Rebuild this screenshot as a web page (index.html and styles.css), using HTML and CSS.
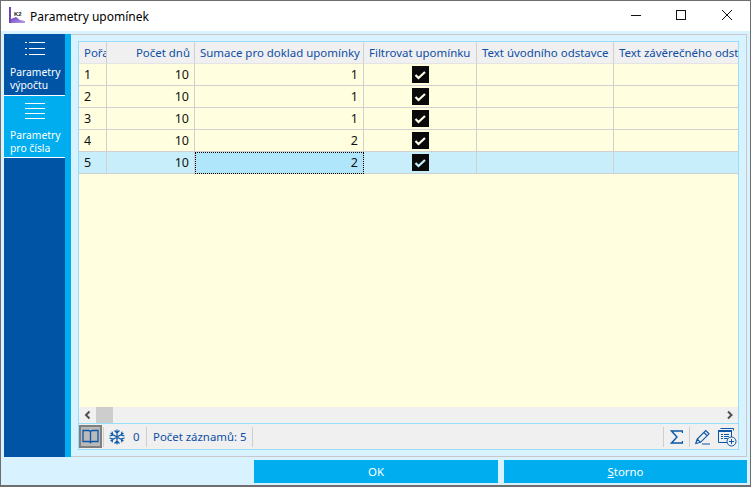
FILE: index.html
```html
<!DOCTYPE html>
<html lang="cs">
<head>
<meta charset="utf-8">
<title>Parametry upomínek</title>
<link rel="stylesheet" href="styles.css">
</head>
<body>
<div class="window">
  <header class="titlebar">
    <svg class="app-icon" width="16" height="16" viewBox="0 0 16 16">
      <defs><linearGradient id="lg" x1="0" y1="0" x2="1" y2="1"><stop offset="0" stop-color="#6a3fc0"/><stop offset="1" stop-color="#b9a2e6"/></linearGradient></defs>
      <path d="M0 0h2v16H0z" fill="#6f45b8"/>
      <path d="M2 12l5-2 4 3 5 1v2H2z" fill="url(#lg)"/>
    </svg>
    <span class="app-k2">K2</span>
    <span class="title">Parametry upomínek</span>
    <div class="winctrls">
      <svg width="46" height="30" viewBox="0 0 46 30"><path d="M19 14.500h10" stroke="#111" fill="none"/></svg>
      <svg width="46" height="30" viewBox="0 0 46 30"><rect x="18.500" y="9.500" width="9" height="9" stroke="#111" fill="none"/></svg>
      <svg width="46" height="30" viewBox="0 0 46 30"><path d="M18 9l10 10M28 9L18 19" stroke="#111" fill="none"/></svg>
    </div>
  </header>
  <div class="body">
    <nav class="sidebar">
      <a class="tab tab-a">
        <svg width="20" height="13" viewBox="0 0 20 13"><path d="M4 .5h16M4 6.500h16M4 12.500h16M0 .5h2M0 6.500h2M0 12.500h2" stroke="#fff" fill="none"/></svg>
        <span class="tab-text">Parametry<br>výpočtu</span>
      </a>
      <a class="tab tab-b">
        <svg width="20" height="17" viewBox="0 0 20 17"><path d="M0 .5h20M0 5.500h20M0 10.500h20M0 15.500h20" stroke="#fff" fill="none"/></svg>
        <span class="tab-text">Parametry<br>pro čísla</span>
      </a>
    </nav>
    <div class="strip"></div>
    <main class="panel">
      <div class="grid">
        <div class="table">
          <div class="row head">
            <div class="c c1">Pořa</div><div class="c c2 r">Počet dnů</div><div class="c c3">Sumace pro doklad upomínky</div><div class="c c4">Filtrovat upomínku</div><div class="c c5">Text úvodního odstavce</div><div class="c c6">Text závěrečného odstavce</div>
          </div>
          <div class="row">
            <div class="c c1">1</div><div class="c c2 r">10</div><div class="c c3 r">1</div><div class="c c4 chk"><svg width="17" height="17" viewBox="0 0 17 17"><rect width="17" height="17" fill="#0a0a0a"/><path d="M3.500 9l3 3 6.500-6" stroke="#fffde6" stroke-width="2.200" fill="none"/></svg></div><div class="c c5"></div><div class="c c6"></div>
          </div>
          <div class="row">
            <div class="c c1">2</div><div class="c c2 r">10</div><div class="c c3 r">1</div><div class="c c4 chk"><svg width="17" height="17" viewBox="0 0 17 17"><rect width="17" height="17" fill="#0a0a0a"/><path d="M3.500 9l3 3 6.500-6" stroke="#fffde6" stroke-width="2.200" fill="none"/></svg></div><div class="c c5"></div><div class="c c6"></div>
          </div>
          <div class="row">
            <div class="c c1">3</div><div class="c c2 r">10</div><div class="c c3 r">1</div><div class="c c4 chk"><svg width="17" height="17" viewBox="0 0 17 17"><rect width="17" height="17" fill="#0a0a0a"/><path d="M3.500 9l3 3 6.500-6" stroke="#fffde6" stroke-width="2.200" fill="none"/></svg></div><div class="c c5"></div><div class="c c6"></div>
          </div>
          <div class="row">
            <div class="c c1">4</div><div class="c c2 r">10</div><div class="c c3 r">2</div><div class="c c4 chk"><svg width="17" height="17" viewBox="0 0 17 17"><rect width="17" height="17" fill="#0a0a0a"/><path d="M3.500 9l3 3 6.500-6" stroke="#fffde6" stroke-width="2.200" fill="none"/></svg></div><div class="c c5"></div><div class="c c6"></div>
          </div>
          <div class="row sel">
            <div class="c c1">5</div><div class="c c2 r">10</div><div class="c c3 r focus">2</div><div class="c c4 chk"><svg width="17" height="17" viewBox="0 0 17 17"><rect width="17" height="17" fill="#0a0a0a"/><path d="M3.500 9l3 3 6.500-6" stroke="#c8eefb" stroke-width="2.200" fill="none"/></svg></div><div class="c c5"></div><div class="c c6"></div>
          </div>
        </div>
        <div class="hscroll">
          <svg class="arrow" width="17" height="16" viewBox="0 0 17 16"><path d="M10.500 4.500L7 8l3.500 3.500" stroke="#505050" stroke-width="2" fill="none"/></svg>
          <div class="thumb"></div>
          <div class="track"></div>
          <svg class="arrow" width="17" height="16" viewBox="0 0 17 16"><path d="M7 4.500L10.500 8 7 11.500" stroke="#505050" stroke-width="2" fill="none"/></svg>
        </div>
        <div class="statusbar">
          <div class="book">
            <svg width="17" height="15" viewBox="0 0 17 15"><path d="M1 1.500h5.500q1.500 0 2 1.500q.5-1.500 2-1.500H16v11h-5.500q-1.500 0-2 1q-.5-1-2-1H1zM8.500 3v10" stroke="#0d57a8" stroke-width="1.300" fill="none"/></svg>
          </div>
          <span class="sep"></span>
          <svg class="snow" width="16" height="16" viewBox="0 0 16 16"><path d="M8 .5v15M1.500 4.200l13 7.600M14.500 4.200l-13 7.600M5.500 1.500L8 4l2.500-2.500M5.500 14.500L8 12l2.500 2.500M.5 7L3.800 6l-.8-3.400M15.500 9l-3.300 1 .8 3.400M15.500 7l-3.300-1 .8-3.400M.5 9l3.300 1-.8 3.400" stroke="#0d57a8" stroke-width="1.200" fill="none"/></svg>
          <span class="zero">0</span>
          <span class="sep"></span>
          <span class="count">Počet záznamů: 5</span>
          <span class="sep"></span>
          <span class="spacer"></span>
          <span class="sep"></span>
          <svg class="tool sigma" width="13" height="14" viewBox="0 0 13 14"><path d="M12.500 3V1H1.500l5.500 6-5.500 6h11v-2" stroke="#0d57a8" stroke-width="1.400" fill="none"/></svg>
          <span class="sep"></span>
          <svg class="tool pen" width="16" height="16" viewBox="0 0 16 16"><path d="M.8 14.500l1.400-4.500L10.700 1.500l3.300 3.300-8.500 8.500zM9 3.500l3.300 3.300M2.200 10l3.300 3.300M7 15h8" stroke="#0d57a8" stroke-width="1.200" fill="none"/></svg>
          <svg class="tool last" width="20" height="20" viewBox="0 0 20 20"><path d="M3.500 1.500h13v2M1.500 3.500h13v12h-13z" stroke="#0d57a8" fill="none"/><path d="M1 3h14v2H1z" fill="#0d57a8"/><path d="M4 7.500h2M7 7.500h5M4 9.500h2M7 9.500h5M4 11.500h2M7 11.500h4" stroke="#0d57a8" fill="none"/><circle cx="14.500" cy="14.500" r="4.500" fill="#f0f0f0" stroke="#0d57a8"/><path d="M12 14.500h5M14.500 12v5" stroke="#0d57a8" fill="none"/></svg>
        </div>
      </div>
    </main>
  </div>
  <footer class="buttons">
    <button class="btn btn-ok">OK</button>
    <button class="btn btn-storno"><u>S</u>torno</button>
  </footer>
</div>
</body>
</html>
```
FILE: styles.css
```css
* { box-sizing: border-box; }
html, body { margin: 0; padding: 0; }
body { width: 751px; height: 487px; overflow: hidden; font-family: "Noto Sans", sans-serif; font-size: 11px; }
.window { width: 751px; height: 487px; border: 1px solid #6e6e6e; border-bottom-width: 2px; background: #d9f2ff; display: flex; flex-direction: column; }
.titlebar { height: 30px; flex: none; background: #fff; display: flex; align-items: center; padding-left: 8px; position: relative; }
.app-icon { flex: none; margin-bottom: 2px; }
.app-k2 { position: absolute; left: 4px; top: 10px; margin-left: 8px; padding: 0 1px; font: bold 6px/7px "Liberation Sans", sans-serif; color: #222; }
.title { margin-left: 5px; font: 12px "Noto Sans", sans-serif; color: #000; }
.winctrls { margin-left: auto; display: flex; height: 30px; }
.body { flex: none; height: 423px; margin-top: 3px; margin-left: 3px; display: flex; }
.sidebar { width: 61px; height: 423px; background: #0054a6; flex: none; }
.tab { display: flex; flex-direction: column; align-items: center; color: #fff; border-bottom: 1px solid #fff; height: 62px; }
.tab-a { background: #0054a6; padding-top: 8px; }
.tab-b { background: #00adef; padding-top: 7px; }
.tab-text { display: block; width: 100%; padding-left: 6px; font: 10.3px/13px "Noto Sans", sans-serif; white-space: nowrap; }
.tab-a .tab-text { margin-top: 11px; }
.tab-b .tab-text { margin-top: 9px; }
.strip { width: 6px; background: #00adef; flex: none; }
.panel { width: 676px; height: 423px; flex: none; background: #d9f2ff; border: 1px solid #c8c8c8; border-left: 0; padding: 6px 7px 6px 7px; }
.grid { width: 661px; height: 409px; border: 1px solid #99dcfb; background: #ffffe0; display: flex; flex-direction: column; }
.table { flex: 1; overflow: hidden; }
.row { display: grid; grid-template-columns: 28px 88px 169px 113px 137px 125px; height: 22px; width: 660px; }
.c { border-right: 1px solid #d0d0d0; border-bottom: 1px solid #d0d0d0; padding: 0 5px; line-height: 21px; white-space: nowrap; overflow: hidden; font-family: "Noto Sans", sans-serif; font-size: 12.5px; color: #111; }
.c6 { border-right: 0; }
.r { text-align: right; }
.head .c { background: #f0f0f0; color: #0d4ea6; font-size: 11.45px; border-bottom-color: #e4e4e4; padding-right: 4px; }
.chk { display: flex; align-items: center; justify-content: center; padding: 0; }
.sel .c { background: #c8eefb; }
.sel .focus { background: #b0e6fb; outline: 1px dotted #000; outline-offset: -1px; }
.hscroll { height: 17px; flex: none; background: #f0f0f0; display: flex; border-bottom: 1px solid #99dcfb; }
.arrow { flex: none; }
.thumb { width: 17px; background: #cdcdcd; flex: none; }
.track { flex: 1; }
.statusbar { height: 25px; flex: none; background: #f0f0f0; display: flex; align-items: center; color: #0d4ea6; }
.book { width: 23px; height: 23px; background: #b9b9b9; border: 2px solid #7f7f7f; display: flex; align-items: center; justify-content: center; flex: none; }
.sep { width: 1px; height: 20px; background: #cfcfcf; flex: none; margin: 0 4px 0 1px; }
.snow { margin-left: 1px; flex: none; }
.zero { margin-left: 8px; margin-right: 5px; font: 11.4px "Noto Sans", sans-serif; width: 7px; }
.count { font: 11.4px "Noto Sans", sans-serif; margin-left: 2px; width: 98px; white-space: nowrap; }
.spacer { flex: 1; }
.tool { flex: none; }
.sigma { margin-left: 2px; margin-right: 5px; }
.pen { margin-left: 1px; }
.tool.last { margin-left: 6px; margin-right: 1px; }
.buttons { display: flex; justify-content: flex-end; gap: 6px; margin-top: 3px; padding-right: 3px; }
.btn { height: 23px; border: 0; background: #00adef; color: #fff; font: 11.4px "Noto Sans", sans-serif; padding: 0; }
.btn-ok { width: 244px; }
.btn-storno { width: 243px; }
```
